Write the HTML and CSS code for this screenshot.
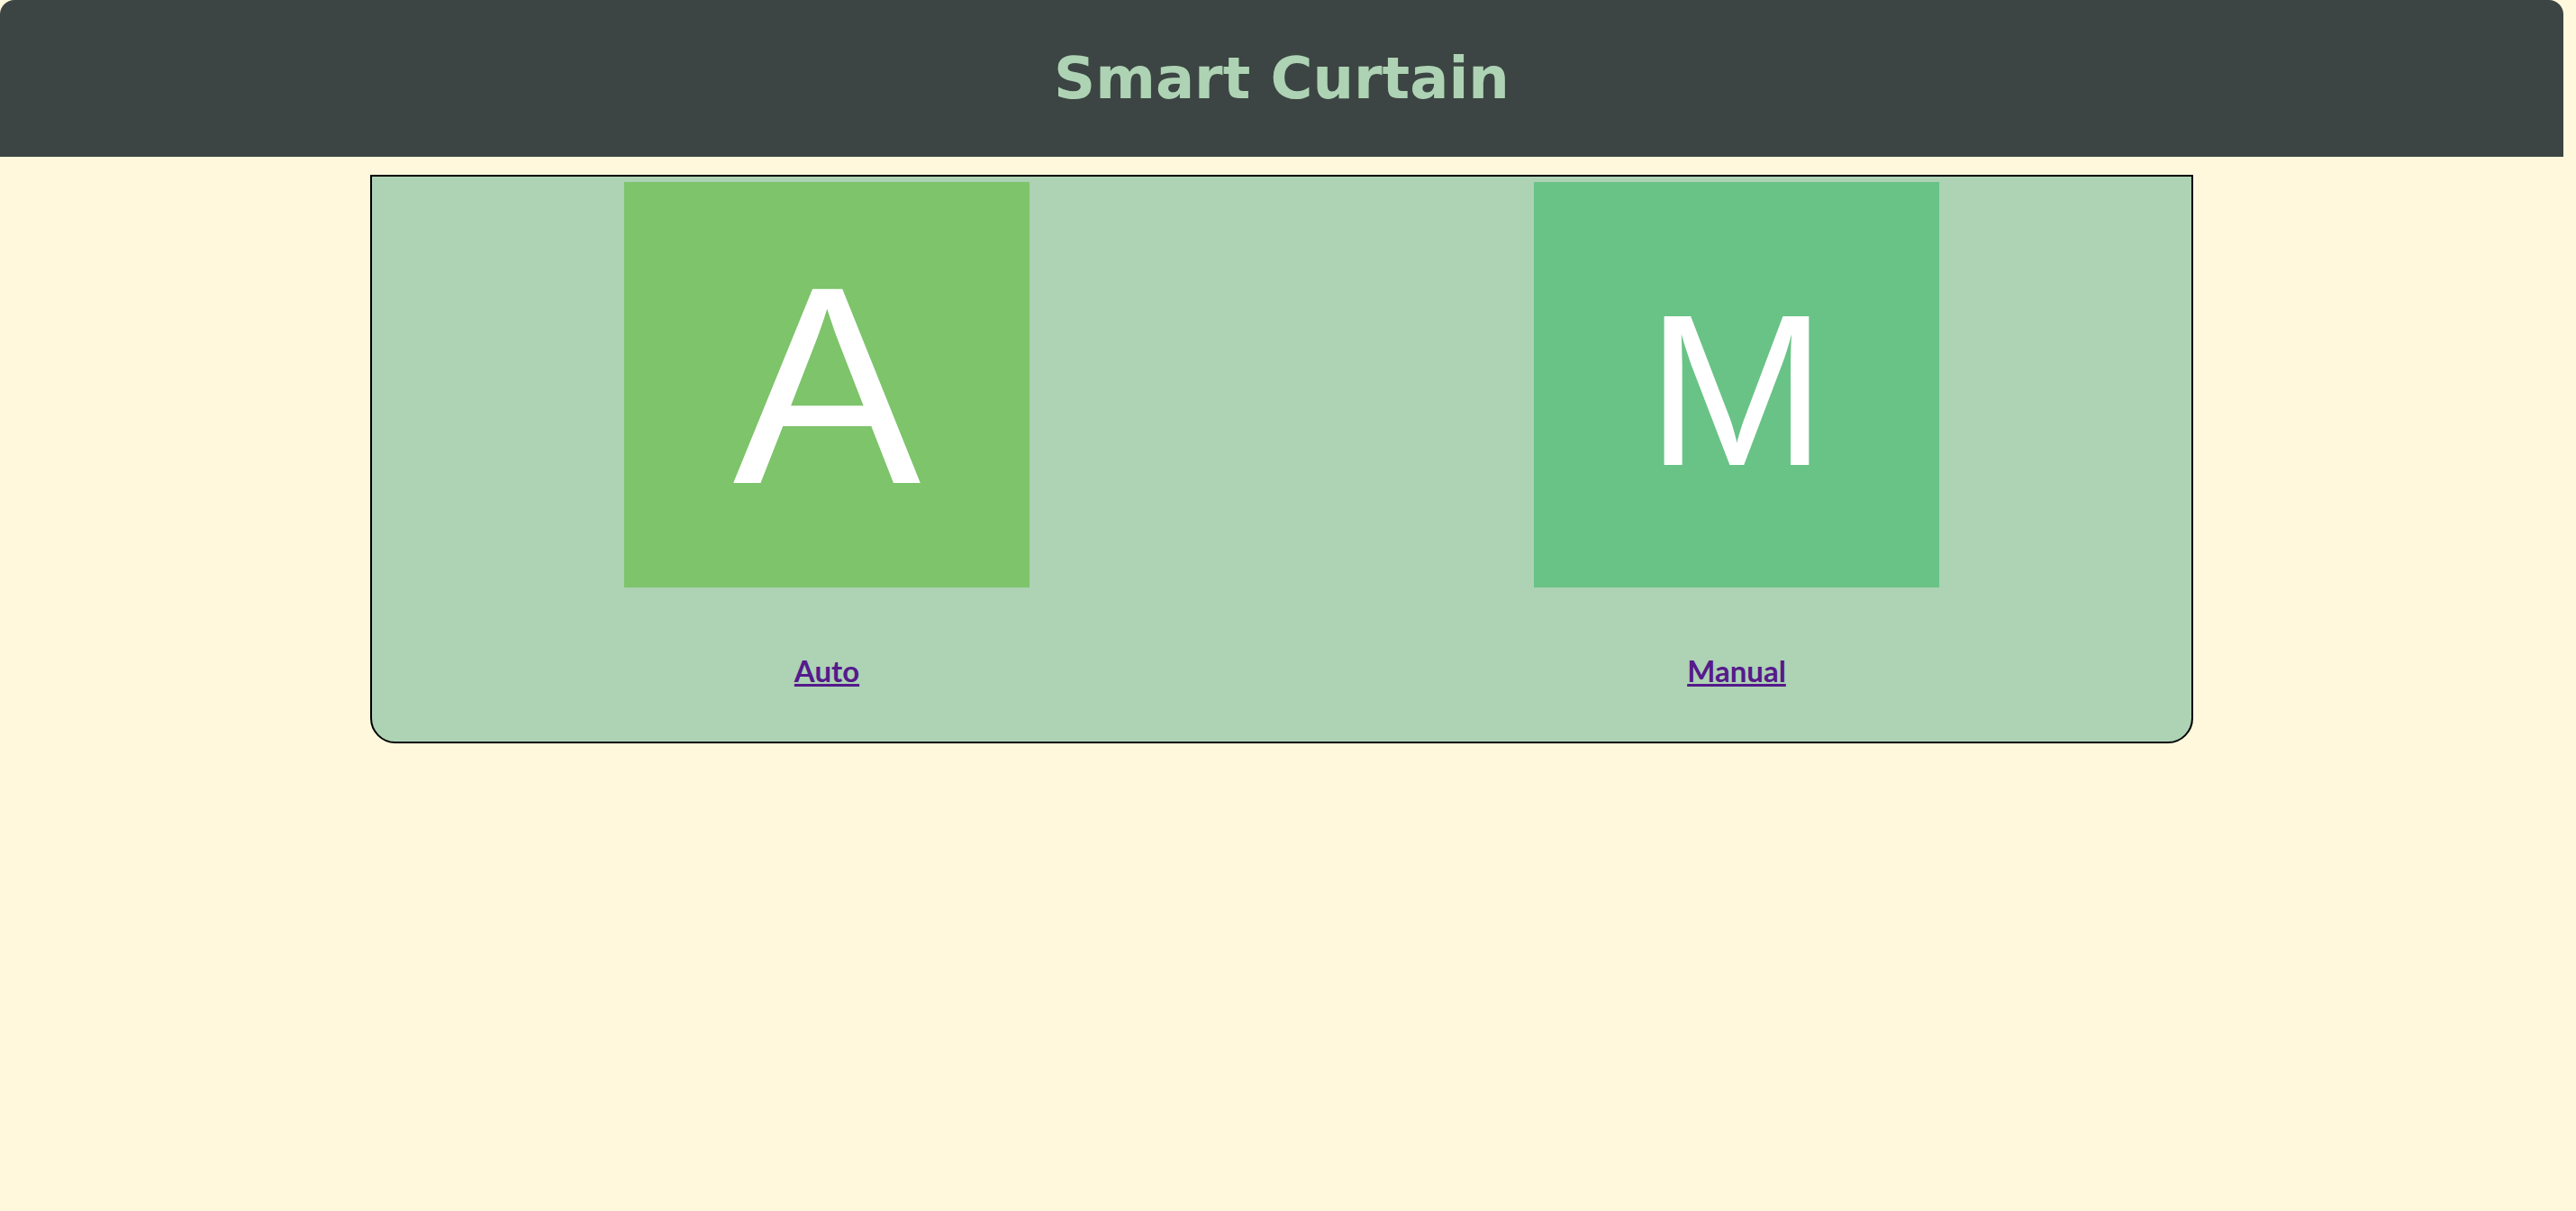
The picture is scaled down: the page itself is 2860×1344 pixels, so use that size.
FILE: index.html
```html
<!DOCTYPE html>
<html lang="en">
<head>
<meta charset="utf-8">
<title>Smart Curtain</title>
<link rel="stylesheet" href="styles.css">
</head>
<body>
<div class="page">
  <header class="topbar">
    <h1 class="title">Smart Curtain</h1>
  </header>
  <main class="card">
    <div class="option">
      <div class="tile tile-auto"><span class="glyph glyph-a">A</span></div>
      <p class="caption"><a class="link" href="#auto">Auto</a></p>
    </div>
    <div class="option">
      <div class="tile tile-manual"><span class="glyph glyph-m">M</span></div>
      <p class="caption"><a class="link" href="#manual">Manual</a></p>
    </div>
  </main>
</div>
</body>
</html>
```
FILE: styles.css
```css
html, body {
  margin: 0;
  padding: 0;
  background: #fff8dc;
}

.page {
  width: calc(100% - 14px);
  display: flex;
  flex-direction: column;
  align-items: center;
}

.topbar {
  width: 100%;
  height: 174px;
  background: #3c4543;
  border-radius: 16px 16px 0 0;
  display: flex;
  align-items: center;
  justify-content: center;
}

.title {
  margin: 0;
  font-family: "DejaVu Sans", Verdana, sans-serif;
  font-weight: bold;
  font-size: 64px;
  color: #aed3b4;
  line-height: normal;
}

.card {
  box-sizing: border-box;
  width: 2024px;
  margin-top: 20px;
  background: #add2b4;
  border: 2px solid #000;
  border-radius: 0 0 28px 28px;
  padding: 6px 0 59px;
  display: grid;
  grid-template-columns: 1fr 1fr;
}

.option {
  display: flex;
  flex-direction: column;
  align-items: center;
}

.tile {
  box-sizing: border-box;
  width: 450px;
  height: 450px;
  display: flex;
  align-items: center;
  justify-content: center;
}

.tile-auto {
  background: #7dc46b;
}

.tile-manual {
  background: #69c386;
  padding-top: 12px;
}

.glyph {
  font-family: "Liberation Sans", Arial, sans-serif;
  font-weight: 400;
  color: #fff;
  line-height: 1;
}

.glyph-a {
  font-size: 313px;
}

.glyph-m {
  font-size: 240px;
}

.caption {
  margin: 72px 0 0;
  line-height: 40px;
  font-family: Lato, "Liberation Sans", sans-serif;
  font-size: 33px;
  font-weight: 700;
}

.link {
  color: #551a8b;
  text-decoration: underline;
}
```
